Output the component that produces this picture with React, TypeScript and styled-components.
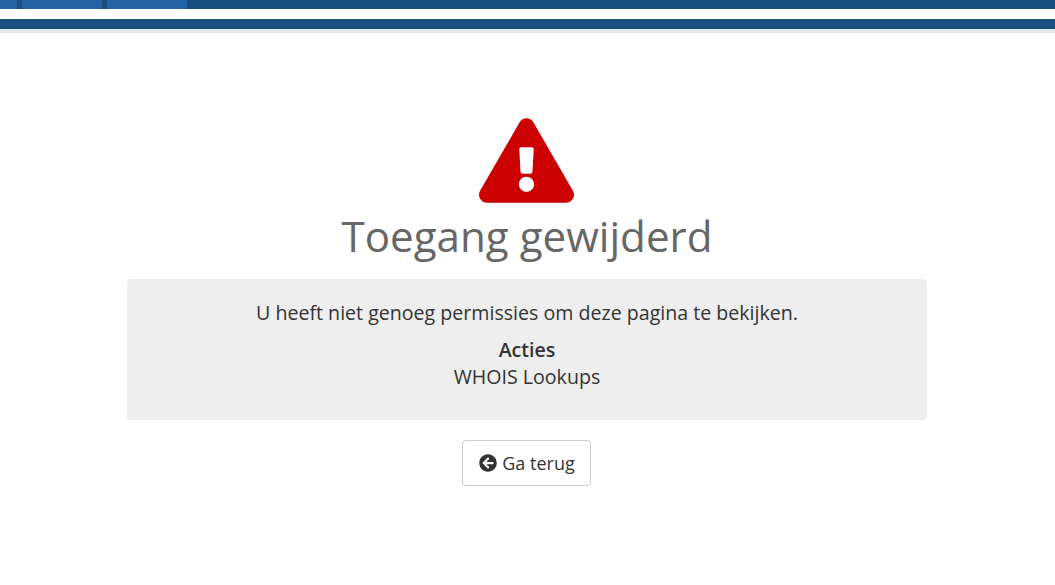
import React from "react";
import styled, { createGlobalStyle } from "styled-components";
import { FaArrowCircleLeft, FaExclamationTriangle } from "react-icons/fa";

const GlobalStyle = createGlobalStyle`
  html, body {
    margin: 0;
    padding: 0;
    background: #fff;
    font-family: "Open Sans", sans-serif;
    color: #333;
  }
`;

const TopBar = styled.div`
  display: flex;
  height: 9px;
  background: #1a4f82;
`;

const Tab = styled.div<{ $width: number }>`
  width: ${(props) => props.$width}px;
  margin-right: 5px;
  background: #2263a5;
`;

const SubBar = styled.div`
  height: 10px;
  margin-top: 10px;
  background: #1a4f82;
  border-bottom: 4px solid #e3e6ea;
`;

const Content = styled.main`
  display: flex;
  flex-direction: column;
  align-items: center;
  padding: 85px 1px 0 0;
`;

const WarningIcon = styled(FaExclamationTriangle)`
  display: block;
  width: 95px;
  height: 85px;
  margin-right: 1px;
  color: #cc0000;
`;

const Title = styled.h1`
  margin: 4px 0 14px;
  font-size: 42.15px;
  line-height: 58px;
  font-weight: 400;
  color: #666;
`;

const Panel = styled.section`
  box-sizing: border-box;
  width: 800px;
  height: 141px;
  padding: 20px;
  background: #eee;
  border-radius: 4px;
  font-size: 19.6px;
  line-height: 27px;
  text-align: center;
`;

const Message = styled.p`
  margin: 0 0 10px;
`;

const ActionTitle = styled.div`
  font-weight: 600;
`;

const BackButton = styled.button`
  display: flex;
  align-items: center;
  gap: 5px;
  box-sizing: border-box;
  height: 46px;
  margin: 20px 1px 0 0;
  padding: 0 15px 0 16px;
  background: #fff;
  border: 1px solid #ccc;
  border-radius: 4px;
  font-family: inherit;
  font-size: 18px;
  color: #333;
`;

const BackIcon = styled(FaArrowCircleLeft)`
  width: 18px;
  height: 18px;
`;

export default function App() {
  return (
    <>
      <GlobalStyle />
      <TopBar>
        <Tab $width={17} />
        <Tab $width={80} />
        <Tab $width={80} />
      </TopBar>
      <SubBar />
      <Content>
        <WarningIcon />
        <Title>Toegang gewijderd</Title>
        <Panel>
          <Message>U heeft niet genoeg permissies om deze pagina te bekijken.</Message>
          <ActionTitle>Acties</ActionTitle>
          <div>WHOIS Lookups</div>
        </Panel>
        <BackButton>
          <BackIcon />
          Ga terug
        </BackButton>
      </Content>
    </>
  );
}
